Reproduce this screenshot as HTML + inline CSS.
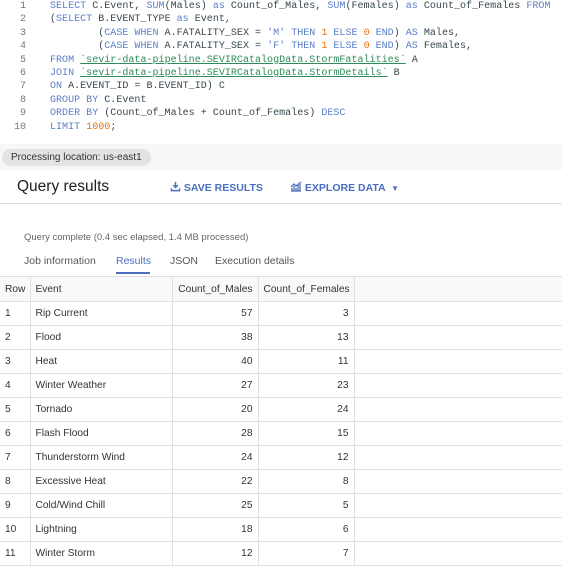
<!DOCTYPE html>
<html><head><style>
body{margin:0;width:562px;height:568px;background:#fff;font-family:"Liberation Sans",sans-serif;overflow:hidden;position:relative;color:#202124}
.code{position:absolute;left:0;top:0;width:562px;font-family:"Liberation Mono",monospace;font-size:10.05px;color:#37474f}
.ln{position:absolute;height:13.4px;line-height:13.4px;white-space:pre}
.n{position:absolute;width:26px;text-align:right;color:#777}
.c{position:absolute;left:50px}
.k{color:#5a7ec6}.s{color:#2e8b57;text-decoration:underline;text-decoration-color:#2e8b57}.num{color:#e8710a}
.abs{position:absolute}
table{position:absolute;left:0;top:276px;border-collapse:collapse;font-size:10.2px;table-layout:fixed;width:562px}
td{height:23px;border-bottom:1px solid #e0e0e0;border-right:1px solid #e0e0e0;padding:0 5px;color:#333;overflow:hidden;white-space:nowrap}
tr.h td{height:24px;background:#f8f9fa;border-top:1px solid #ddd}
td.r{text-align:right}
</style></head><body>
<div class="code">
<div class="ln" style="top:0"><span class="n">1</span><span class="c"><span class="k">SELECT</span> C.Event, <span class="k">SUM</span>(Males) <span class="k">as</span> Count_of_Males, <span class="k">SUM</span>(Females) <span class="k">as</span> Count_of_Females <span class="k">FROM</span></span></div>
<div class="ln" style="top:13.4px"><span class="n">2</span><span class="c">(<span class="k">SELECT</span> B.EVENT_TYPE <span class="k">as</span> Event,</span></div>
<div class="ln" style="top:26.8px"><span class="n">3</span><span class="c">        (<span class="k">CASE WHEN</span> A.FATALITY_SEX = <span class="k">'M'</span> <span class="k">THEN</span> <span class="num">1</span> <span class="k">ELSE</span> <span class="num">0</span> <span class="k">END</span>) <span class="k">AS</span> Males,</span></div>
<div class="ln" style="top:40.2px"><span class="n">4</span><span class="c">        (<span class="k">CASE WHEN</span> A.FATALITY_SEX = <span class="k">'F'</span> <span class="k">THEN</span> <span class="num">1</span> <span class="k">ELSE</span> <span class="num">0</span> <span class="k">END</span>) <span class="k">AS</span> Females,</span></div>
<div class="ln" style="top:53.6px"><span class="n">5</span><span class="c"><span class="k">FROM</span> <span class="s">`sevir-data-pipeline.SEVIRCatalogData.StormFatalities`</span> A</span></div>
<div class="ln" style="top:67px"><span class="n">6</span><span class="c"><span class="k">JOIN</span> <span class="s">`sevir-data-pipeline.SEVIRCatalogData.StormDetails`</span> B</span></div>
<div class="ln" style="top:80.4px"><span class="n">7</span><span class="c"><span class="k">ON</span> A.EVENT_ID = B.EVENT_ID) C</span></div>
<div class="ln" style="top:93.8px"><span class="n">8</span><span class="c"><span class="k">GROUP BY</span> C.Event</span></div>
<div class="ln" style="top:107.2px"><span class="n">9</span><span class="c"><span class="k">ORDER BY</span> (Count_of_Males + Count_of_Females) <span class="k">DESC</span></span></div>
<div class="ln" style="top:120.6px"><span class="n">10</span><span class="c"><span class="k">LIMIT</span> <span class="num">1000</span>;</span></div>
</div>
<div class="abs" style="left:0;top:144px;width:562px;height:26px;background:#f7f7f7"></div>
<div class="abs" style="left:2px;top:149px;width:149px;height:17px;border-radius:9px;background:#e2e3e5;font-size:10px;line-height:17px;padding-left:9px;box-sizing:border-box;color:#333">Processing location: us-east1</div>
<div class="abs" style="left:0;top:203px;width:562px;height:1px;background:#ddd"></div>
<div class="abs" style="left:17px;top:178px;font-size:15.5px;color:#202124">Query results</div>
<div class="abs" style="left:170px;top:181px;font-size:10.5px;font-weight:bold;color:#4a6fbf">
<svg width="11" height="11" viewBox="0 0 12 12" style="vertical-align:-1px"><path d="M6 1v6M3.5 4.5L6 7l2.5-2.5M1.5 8v2.5h9V8" stroke="#4a6fbf" stroke-width="1.6" fill="none"/></svg> SAVE RESULTS</div>
<div class="abs" style="left:290px;top:181px;font-size:10.5px;font-weight:bold;color:#4a6fbf">
<svg width="12" height="11" viewBox="0 0 12 11" style="vertical-align:-1px"><path d="M1 10h10M2 10V7M4 10V5M6 10V7M8 10V4M10 10V3M1 6l3-3 2 2 5-4" stroke="#4a6fbf" stroke-width="1.3" fill="none"/></svg> EXPLORE DATA &nbsp;<span style="font-size:8px">▼</span></div>
<div class="abs" style="left:24px;top:232px;font-size:9.5px;color:#666">Query complete (0.4 sec elapsed, 1.4 MB processed)</div>
<div class="abs" style="left:24px;top:255px;font-size:10.5px;color:#555">Job information</div>
<div class="abs" style="left:116px;top:255px;font-size:10.5px;color:#4a6fbf">Results</div>
<div class="abs" style="left:116px;top:272px;width:34px;height:2px;background:#4a6fbf"></div>
<div class="abs" style="left:170px;top:255px;font-size:10.5px;color:#555">JSON</div>
<div class="abs" style="left:215px;top:255px;font-size:10.5px;color:#555">Execution details</div>
<table>
<colgroup><col style="width:30px"><col style="width:142px"><col style="width:86px"><col style="width:96px"><col></colgroup>
<tr class="h"><td>Row</td><td>Event</td><td class="r">Count_of_Males</td><td>Count_of_Females</td><td style="border-right:none"></td></tr>
<tr><td>1</td><td>Rip Current</td><td class="r">57</td><td class="r">3</td><td style="border-right:none"></td></tr>
<tr><td>2</td><td>Flood</td><td class="r">38</td><td class="r">13</td><td style="border-right:none"></td></tr>
<tr><td>3</td><td>Heat</td><td class="r">40</td><td class="r">11</td><td style="border-right:none"></td></tr>
<tr><td>4</td><td>Winter Weather</td><td class="r">27</td><td class="r">23</td><td style="border-right:none"></td></tr>
<tr><td>5</td><td>Tornado</td><td class="r">20</td><td class="r">24</td><td style="border-right:none"></td></tr>
<tr><td>6</td><td>Flash Flood</td><td class="r">28</td><td class="r">15</td><td style="border-right:none"></td></tr>
<tr><td>7</td><td>Thunderstorm Wind</td><td class="r">24</td><td class="r">12</td><td style="border-right:none"></td></tr>
<tr><td>8</td><td>Excessive Heat</td><td class="r">22</td><td class="r">8</td><td style="border-right:none"></td></tr>
<tr><td>9</td><td>Cold/Wind Chill</td><td class="r">25</td><td class="r">5</td><td style="border-right:none"></td></tr>
<tr><td>10</td><td>Lightning</td><td class="r">18</td><td class="r">6</td><td style="border-right:none"></td></tr>
<tr><td>11</td><td>Winter Storm</td><td class="r">12</td><td class="r">7</td><td style="border-right:none"></td></tr>
</table>
</body></html>
